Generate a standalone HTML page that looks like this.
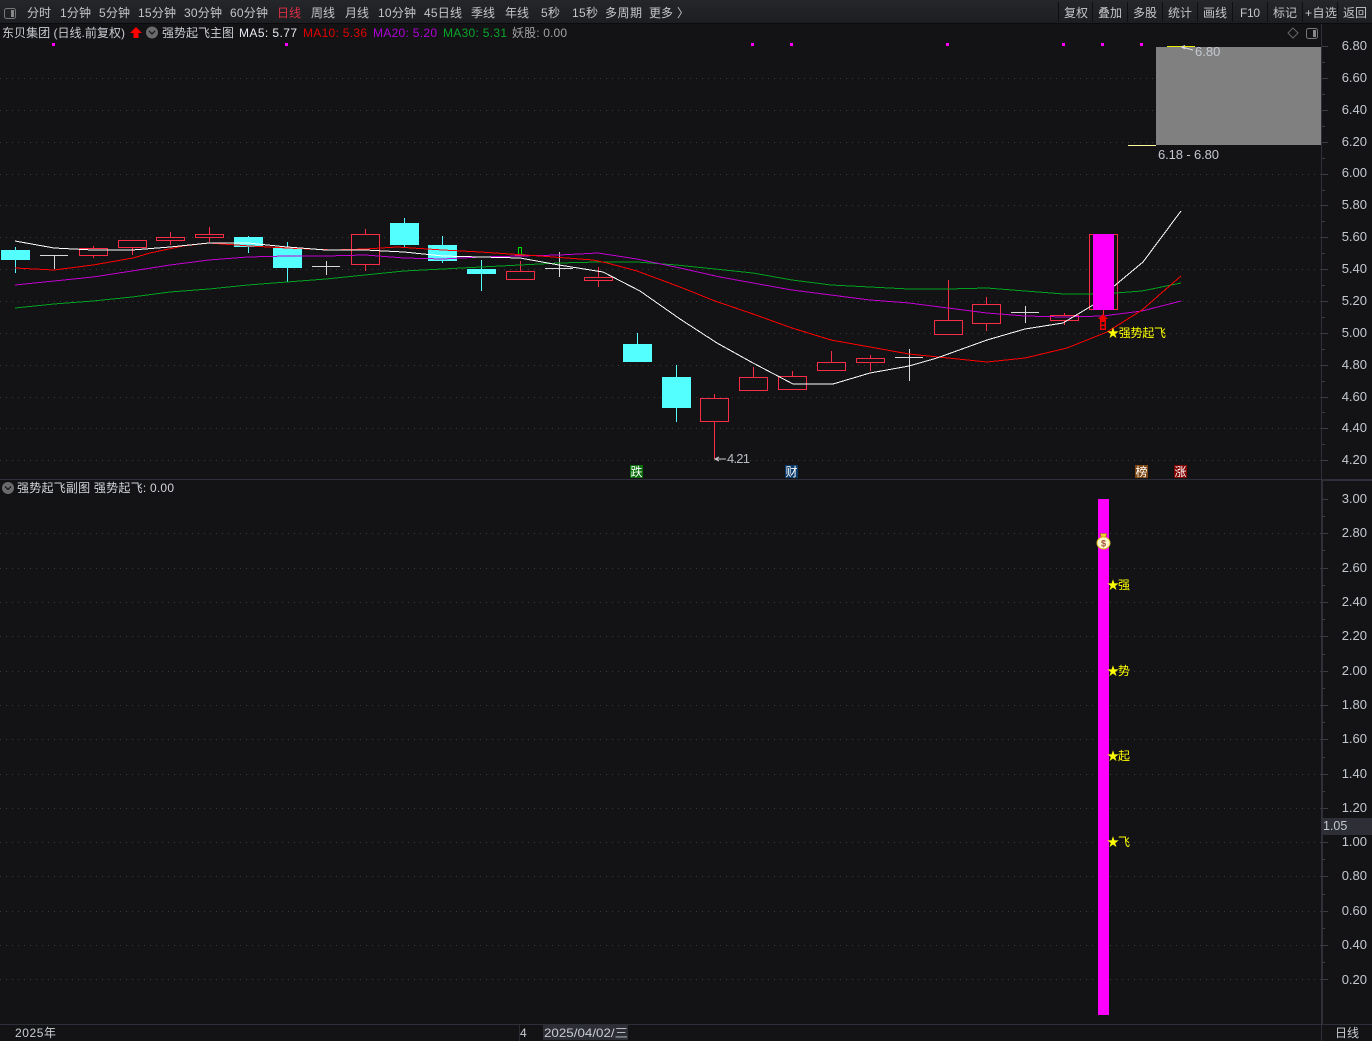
<!DOCTYPE html>
<html lang="zh"><head><meta charset="utf-8"><title>东贝集团</title>
<style>
html,body{margin:0;padding:0;background:#131315;width:1372px;height:1041px;overflow:hidden}
svg{display:block;font-family:"Liberation Sans","Noto Sans CJK SC",sans-serif}
.tb text{font-size:12px;fill:#c4c6ca}
.ax text{font-size:13px;fill:#c3c8d0;text-anchor:end}
.grid line{stroke:#3a3a3e;stroke-width:1;stroke-dasharray:1 5}
.tick line{stroke:#3a3c46;stroke-width:1}
.r rect{fill:#131315;stroke:#f92d45;stroke-width:1}
.r line{stroke:#f92d45;stroke-width:1}
.c rect{fill:#54ffff}
.c line{stroke:#54ffff;stroke-width:1}
.d line{stroke:#d8d8d8;stroke-width:1}
.ma polyline{fill:none;stroke-width:1}
.y text{font-size:12px;fill:#ffff00}
</style></head><body>
<svg width="1372" height="1041" viewBox="0 0 1372 1041" xmlns="http://www.w3.org/2000/svg">
<rect width="1372" height="1041" fill="#131315"/>
<defs><linearGradient id="tbg" x1="0" y1="0" x2="0" y2="1"><stop offset="0" stop-color="#24262a"/><stop offset="1" stop-color="#1c1e22"/></linearGradient></defs>
<rect x="0" y="0" width="1372" height="23" fill="url(#tbg)"/>
<rect x="0" y="23" width="1372" height="1" fill="#0b0b0c"/>
<rect x="4.5" y="8.5" width="11" height="10" rx="2" fill="none" stroke="#777" />
<rect x="11" y="10" width="3" height="7" fill="#888"/>
<g class="tb">
<text x="27" y="17" textLength="24">分时</text>
<text x="60" y="17" textLength="31">1分钟</text>
<text x="99" y="17" textLength="31">5分钟</text>
<text x="138" y="17" textLength="38">15分钟</text>
<text x="184" y="17" textLength="38">30分钟</text>
<text x="230" y="17" textLength="38">60分钟</text>
<text x="277" y="17" textLength="24" style="fill:#dc2f45">日线</text>
<text x="311" y="17" textLength="24">周线</text>
<text x="345" y="17" textLength="24">月线</text>
<text x="378" y="17" textLength="38">10分钟</text>
<text x="424" y="17" textLength="38">45日线</text>
<text x="471" y="17" textLength="24">季线</text>
<text x="505" y="17" textLength="24">年线</text>
<text x="541" y="17" textLength="19">5秒</text>
<text x="572" y="17" textLength="26">15秒</text>
<text x="605" y="17" textLength="37">多周期</text>
<text x="649" y="17">更多</text><text x="677" y="17">〉</text>
<text x="1064" y="17" textLength="24">复权</text>
<text x="1098" y="17" textLength="24">叠加</text>
<text x="1133" y="17" textLength="24">多股</text>
<text x="1168" y="17" textLength="24">统计</text>
<text x="1203" y="17" textLength="24">画线</text>
<text x="1240" y="17" textLength="20">F10</text>
<text x="1273" y="17" textLength="24">标记</text>
<text x="1305" y="17" textLength="32">+自选</text>
<text x="1343" y="17" textLength="24">返回</text>
</g>
<g fill="#0e0f11">
<rect x="1058" y="2" width="1" height="20"/><rect x="1092" y="2" width="1" height="20"/><rect x="1127" y="2" width="1" height="20"/><rect x="1162" y="2" width="1" height="20"/><rect x="1197" y="2" width="1" height="20"/><rect x="1232" y="2" width="1" height="20"/><rect x="1267" y="2" width="1" height="20"/><rect x="1302" y="2" width="1" height="20"/><rect x="1337" y="2" width="1" height="20"/>
</g>

<g style="font-size:12px">
<text x="2" y="37" fill="#c8ccd2" textLength="123" lengthAdjust="spacingAndGlyphs">东贝集团 (日线.前复权)</text>
<path d="M136 27 L142 33 L138.5 33 L138.5 38 L133.5 38 L133.5 33 L130 33 Z" fill="#ff0000"/>
<circle cx="152" cy="32.5" r="6" fill="#6a6a6a"/><path d="M149 31 L152 34 L155 31" fill="none" stroke="#1a1a1a" stroke-width="1.3"/>
<text x="162" y="37" fill="#c8ccd2" textLength="72">强势起飞主图</text>
<text x="239" y="37" fill="#e8ecf2" textLength="58">MA5: 5.77</text>
<text x="303" y="37" fill="#e00000" textLength="64">MA10: 5.36</text>
<text x="373" y="37" fill="#b000d8" textLength="64">MA20: 5.20</text>
<text x="443" y="37" fill="#0aa52a" textLength="64">MA30: 5.31</text>
<text x="512" y="37" fill="#a0a0a0" textLength="55">妖股: 0.00</text>
</g>
<path d="M1293 28 L1298 33 L1293 38 L1288 33 Z" fill="none" stroke="#666"/>
<rect x="1306.5" y="28.5" width="11" height="10" rx="2" fill="none" stroke="#777"/><rect x="1313" y="30" width="3" height="7" fill="#888"/>

<g class="grid" shape-rendering="crispEdges">
<line x1="0" x2="1321" y1="78.5" y2="78.5"/><line x1="0" x2="1321" y1="110.5" y2="110.5"/><line x1="0" x2="1321" y1="142.5" y2="142.5"/><line x1="0" x2="1321" y1="174.5" y2="174.5"/><line x1="0" x2="1321" y1="205.5" y2="205.5"/><line x1="0" x2="1321" y1="237.5" y2="237.5"/><line x1="0" x2="1321" y1="269.5" y2="269.5"/><line x1="0" x2="1321" y1="301.5" y2="301.5"/><line x1="0" x2="1321" y1="333.5" y2="333.5"/><line x1="0" x2="1321" y1="365.5" y2="365.5"/><line x1="0" x2="1321" y1="397.5" y2="397.5"/><line x1="0" x2="1321" y1="428.5" y2="428.5"/><line x1="0" x2="1321" y1="460.5" y2="460.5"/>
<line x1="0" x2="1321" y1="533.5" y2="533.5"/><line x1="0" x2="1321" y1="568.5" y2="568.5"/><line x1="0" x2="1321" y1="602.5" y2="602.5"/><line x1="0" x2="1321" y1="636.5" y2="636.5"/><line x1="0" x2="1321" y1="671.5" y2="671.5"/><line x1="0" x2="1321" y1="705.5" y2="705.5"/><line x1="0" x2="1321" y1="739.5" y2="739.5"/><line x1="0" x2="1321" y1="774.5" y2="774.5"/><line x1="0" x2="1321" y1="808.5" y2="808.5"/><line x1="0" x2="1321" y1="842.5" y2="842.5"/><line x1="0" x2="1321" y1="876.5" y2="876.5"/><line x1="0" x2="1321" y1="911.5" y2="911.5"/><line x1="0" x2="1321" y1="945.5" y2="945.5"/><line x1="0" x2="1321" y1="979.5" y2="979.5"/>
</g>

<g fill="#ff00ff"><rect x="52" y="43" width="3" height="3"/><rect x="285" y="43" width="3" height="3"/><rect x="751" y="43" width="3" height="3"/><rect x="790" y="43" width="3" height="3"/><rect x="946" y="43" width="3" height="3"/><rect x="1062" y="43" width="3" height="3"/><rect x="1101" y="43" width="3" height="3"/><rect x="1140" y="43" width="3" height="3"/></g>

<rect x="1156" y="47" width="165" height="98" fill="#808080"/>
<rect x="1128" y="145" width="28" height="1" fill="#ffffa0"/>
<rect x="1167" y="46" width="28" height="1" fill="#e8e800"/>
<path d="M1193 50 L1182 47 M1185 45.5 L1181.500 47 L1185 49" stroke="#ddd" fill="none"/>
<text x="1195" y="56" font-size="13" fill="#c3c8d0">6.80</text>
<text x="1158" y="159" font-size="13" fill="#c3c8d0" textLength="61">6.18 - 6.80</text>

<g shape-rendering="crispEdges">
<g class="c">
<line x1="15.500" x2="15.500" y1="247" y2="273"/><rect x="1" y="250" width="29" height="10"/>
<line x1="248.500" x2="248.500" y1="236" y2="253"/><rect x="234" y="237" width="29" height="10"/>
<line x1="287.500" x2="287.500" y1="242" y2="282"/><rect x="273" y="248" width="29" height="20"/>
<line x1="404.500" x2="404.500" y1="218" y2="247"/><rect x="390" y="223" width="29" height="22"/>
<line x1="442.500" x2="442.500" y1="236" y2="263"/><rect x="428" y="245" width="29" height="16"/>
<line x1="481.500" x2="481.500" y1="260" y2="291"/><rect x="467" y="269" width="29" height="5"/>
<line x1="637.500" x2="637.500" y1="333" y2="344"/><rect x="623" y="344" width="29" height="18"/>
<line x1="676.500" x2="676.500" y1="365" y2="422"/><rect x="662" y="377" width="29" height="31"/>
</g>
<g class="d">
<line x1="40" x2="68" y1="255.500" y2="255.500"/><line x1="54.500" x2="54.500" y1="255" y2="269"/>
<line x1="312" x2="340" y1="266.500" y2="266.500"/><line x1="326.500" x2="326.500" y1="261" y2="275"/>
<line x1="545" x2="573" y1="268.500" y2="268.500"/><line x1="559.500" x2="559.500" y1="252" y2="277"/>
<line x1="895" x2="923" y1="357.500" y2="357.500"/><line x1="909.500" x2="909.500" y1="349" y2="381"/>
<line x1="1011" x2="1039" y1="312.500" y2="312.500"/><line x1="1025.500" x2="1025.500" y1="306" y2="323"/>
</g>
<g class="r">
<line x1="93.500" x2="93.500" y1="246" y2="258"/><rect x="79.500" y="248.500" width="28" height="7"/>
<line x1="132.500" x2="132.500" y1="240" y2="255"/><rect x="118.500" y="240.500" width="28" height="7"/>
<line x1="170.500" x2="170.500" y1="232" y2="245"/><rect x="156.500" y="237.500" width="28" height="3"/>
<line x1="209.500" x2="209.500" y1="227" y2="242"/><rect x="195.500" y="234.500" width="28" height="3"/>
<line x1="365.500" x2="365.500" y1="229" y2="271"/><rect x="351.500" y="234.500" width="28" height="30"/>
<line x1="520.500" x2="520.500" y1="261" y2="271"/><rect x="506.500" y="271.500" width="28" height="8"/>
<line x1="598.500" x2="598.500" y1="267" y2="287"/><rect x="584.500" y="277.500" width="28" height="3"/>
<line x1="714.500" x2="714.500" y1="394" y2="459"/><rect x="700.500" y="398.500" width="28" height="23"/>
<line x1="753.500" x2="753.500" y1="367" y2="377"/><rect x="739.500" y="377.500" width="28" height="13"/>
<line x1="792.500" x2="792.500" y1="371" y2="376"/><rect x="778.500" y="376.500" width="28" height="13"/>
<line x1="831.500" x2="831.500" y1="351" y2="362"/><rect x="817.500" y="362.500" width="28" height="8"/>
<line x1="870.500" x2="870.500" y1="355" y2="371"/><rect x="856.500" y="358.500" width="28" height="4"/>
<line x1="948.500" x2="948.500" y1="280" y2="320"/><rect x="934.500" y="320.500" width="28" height="14"/>
<line x1="986.500" x2="986.500" y1="297" y2="331"/><rect x="972.500" y="304.500" width="28" height="19"/>
<line x1="1064.500" x2="1064.500" y1="313" y2="325"/><rect x="1050.500" y="315.500" width="28" height="5"/>
<line x1="1103.500" x2="1103.500" y1="309" y2="317"/><rect x="1089.500" y="234.500" width="28" height="75"/>
</g>
<path d="M515.500 254.500 H518.500 V247.500 H521.500 V254.500 H524.500" fill="none" stroke="#00e000"/>
<rect x="515" y="255" width="11" height="1" fill="#f92d45"/>
</g>

<g class="ma" shape-rendering="crispEdges">
<polyline stroke="#00a020" points="15,308 54,304 93,301 132,297 170,292 209,289 248,285 287,282 326,279 365,275 404,271 443,269 481,267 520,265 559,263 598,262 637,262 676,265 715,269 753,273 792,280 831,285 870,287 909,289 948,289 987,288 1025,291 1064,294 1103,294 1142,291 1181,283"/>
<polyline stroke="#c000d0" points="15,285 54,281 93,277 132,271 170,265 209,260 248,257 287,256 326,256 365,255 404,258 443,259 481,257 520,256 559,255 598,253 637,259 680,268 720,277 753,283 792,290 831,295 870,300 909,303 948,308 987,313 1025,316 1064,317 1103,316 1142,311 1181,301"/>
<polyline stroke="#ff0000" points="15,268 54,270 93,265 133,258 150,253 183,246 209,243 250,246 287,248 333,250 365,249 397,247 443,250 480,252 540,256 593,260 607,263 637,271 680,287 715,301 753,314 792,328 831,340 870,347 909,354 948,358 987,362 1025,358 1067,348 1107,332 1142,310 1181,276"/>
<polyline stroke="#ffffff" points="15,241 54,248 93,250 132,250 170,247 209,243 248,243 287,247 326,250 365,250 404,252 443,256 481,257 520,258 559,265 603,272 640,291 680,319 717,343 753,363 793,384 833,384 870,373 909,366 937,358 987,340 1025,329 1063,323 1093,305 1113,287 1143,262 1181,211"/>
</g>
<rect x="1093" y="234" width="21" height="76" fill="#ff00ff" shape-rendering="crispEdges"/>

<path d="M1103 314 L1108 319 L1106 319 L1106 330 L1100 330 L1100 319 L1098 319 Z" fill="#ee0000"/>
<rect x="1101.500" y="322" width="3" height="2.500" fill="#131315"/><rect x="1101.500" y="326" width="3" height="2.500" fill="#131315"/>
<g class="y"><text x="1107" y="337" textLength="59">★强势起飞</text></g>
<path d="M726 459 H716 M719 457 L715 459 L719 461" stroke="#ccc" fill="none"/>
<text x="727" y="463" font-size="13" fill="#b8bcc4" textLength="23">4.21</text>

<rect x="630" y="465" width="13" height="13" fill="#086c08"/><text x="630.500" y="476" font-size="12" fill="#fff">跌</text>
<rect x="785" y="465" width="13" height="13" fill="#0a3a68"/><text x="785.500" y="476" font-size="12" fill="#fff">财</text>
<rect x="1135" y="465" width="13" height="13" fill="#7a4510"/><text x="1135.500" y="476" font-size="12" fill="#fff">榜</text>
<rect x="1174" y="465" width="13" height="13" fill="#800000"/><text x="1174.500" y="476" font-size="12" fill="#fff">涨</text>

<rect x="0" y="479" width="1372" height="1" fill="#2e2f38"/>
<rect x="1321" y="24" width="1" height="1000" fill="#2e2f38"/>
<rect x="1322" y="480" width="1" height="544" fill="#2e2f38"/>
<rect x="1322" y="480" width="50" height="1" fill="#2e2f38"/>
<circle cx="8" cy="488" r="6" fill="#6a6a6a"/><path d="M5 486.500 L8 489.500 L11 486.500" fill="none" stroke="#1a1a1a" stroke-width="1.3"/>
<text x="17" y="492" font-size="12" fill="#d0d4da" textLength="157">强势起飞副图 强势起飞: 0.00</text>

<rect x="1098" y="499" width="11" height="516" fill="#ff00ff"/>
<g><path d="M1100 533.500 H1107 L1105.500 537.500 H1101.500 Z" fill="#f0d030" stroke="#8a6a10" stroke-width=".6"/>
<ellipse cx="1103.500" cy="543" rx="6.500" ry="6" fill="#fff6c8" stroke="#d8b820"/>
<text x="1103.500" y="546.500" font-size="9" font-weight="bold" text-anchor="middle" fill="#a05040">$</text></g>
<g class="y">
<text x="1107" y="589" textLength="23">★强</text>
<text x="1107" y="675" textLength="23">★势</text>
<text x="1107" y="760" textLength="23">★起</text>
<text x="1107" y="846" textLength="23">★飞</text>
</g>

<g class="tick" shape-rendering="crispEdges">
<line x1="1322" x2="1328" y1="46.500" y2="46.500"/><line x1="1322" x2="1325" y1="62.500" y2="62.500"/><line x1="1322" x2="1328" y1="78.500" y2="78.500"/><line x1="1322" x2="1325" y1="94.500" y2="94.500"/><line x1="1322" x2="1328" y1="110.500" y2="110.500"/><line x1="1322" x2="1325" y1="126.500" y2="126.500"/><line x1="1322" x2="1328" y1="142.500" y2="142.500"/><line x1="1322" x2="1325" y1="158.500" y2="158.500"/><line x1="1322" x2="1328" y1="174.500" y2="174.500"/><line x1="1322" x2="1325" y1="190.500" y2="190.500"/><line x1="1322" x2="1328" y1="205.500" y2="205.500"/><line x1="1322" x2="1325" y1="221.500" y2="221.500"/><line x1="1322" x2="1328" y1="237.500" y2="237.500"/><line x1="1322" x2="1325" y1="253.500" y2="253.500"/><line x1="1322" x2="1328" y1="269.500" y2="269.500"/><line x1="1322" x2="1325" y1="285.500" y2="285.500"/><line x1="1322" x2="1328" y1="301.500" y2="301.500"/><line x1="1322" x2="1325" y1="317.500" y2="317.500"/><line x1="1322" x2="1328" y1="333.500" y2="333.500"/><line x1="1322" x2="1325" y1="349.500" y2="349.500"/><line x1="1322" x2="1328" y1="365.500" y2="365.500"/><line x1="1322" x2="1325" y1="381.500" y2="381.500"/><line x1="1322" x2="1328" y1="397.500" y2="397.500"/><line x1="1322" x2="1325" y1="412.500" y2="412.500"/><line x1="1322" x2="1328" y1="428.500" y2="428.500"/><line x1="1322" x2="1325" y1="444.500" y2="444.500"/><line x1="1322" x2="1328" y1="460.500" y2="460.500"/>
<line x1="1322" x2="1328" y1="499.500" y2="499.500"/><line x1="1322" x2="1325" y1="516.500" y2="516.500"/><line x1="1322" x2="1328" y1="533.500" y2="533.500"/><line x1="1322" x2="1325" y1="550.500" y2="550.500"/><line x1="1322" x2="1328" y1="568.500" y2="568.500"/><line x1="1322" x2="1325" y1="585.500" y2="585.500"/><line x1="1322" x2="1328" y1="602.500" y2="602.500"/><line x1="1322" x2="1325" y1="619.500" y2="619.500"/><line x1="1322" x2="1328" y1="636.500" y2="636.500"/><line x1="1322" x2="1325" y1="654.500" y2="654.500"/><line x1="1322" x2="1328" y1="671.500" y2="671.500"/><line x1="1322" x2="1325" y1="688.500" y2="688.500"/><line x1="1322" x2="1328" y1="705.500" y2="705.500"/><line x1="1322" x2="1325" y1="722.500" y2="722.500"/><line x1="1322" x2="1328" y1="739.500" y2="739.500"/><line x1="1322" x2="1325" y1="757.500" y2="757.500"/><line x1="1322" x2="1328" y1="774.500" y2="774.500"/><line x1="1322" x2="1325" y1="791.500" y2="791.500"/><line x1="1322" x2="1328" y1="808.500" y2="808.500"/><line x1="1322" x2="1328" y1="842.500" y2="842.500"/><line x1="1322" x2="1325" y1="859.500" y2="859.500"/><line x1="1322" x2="1328" y1="876.500" y2="876.500"/><line x1="1322" x2="1325" y1="894.500" y2="894.500"/><line x1="1322" x2="1328" y1="911.500" y2="911.500"/><line x1="1322" x2="1325" y1="928.500" y2="928.500"/><line x1="1322" x2="1328" y1="945.500" y2="945.500"/><line x1="1322" x2="1325" y1="962.500" y2="962.500"/><line x1="1322" x2="1328" y1="979.500" y2="979.500"/>
</g>
<g class="ax">
<text x="1367" y="50">6.80</text><text x="1367" y="82">6.60</text><text x="1367" y="114">6.40</text><text x="1367" y="146">6.20</text><text x="1367" y="177">6.00</text><text x="1367" y="209">5.80</text><text x="1367" y="241">5.60</text><text x="1367" y="273">5.40</text><text x="1367" y="305">5.20</text><text x="1367" y="337">5.00</text><text x="1367" y="369">4.80</text><text x="1367" y="401">4.60</text><text x="1367" y="432">4.40</text><text x="1367" y="464">4.20</text>
<text x="1367" y="503">3.00</text><text x="1367" y="537">2.80</text><text x="1367" y="572">2.60</text><text x="1367" y="606">2.40</text><text x="1367" y="640">2.20</text><text x="1367" y="675">2.00</text><text x="1367" y="709">1.80</text><text x="1367" y="743">1.60</text><text x="1367" y="778">1.40</text><text x="1367" y="812">1.20</text><text x="1367" y="846">1.00</text><text x="1367" y="880">0.80</text><text x="1367" y="915">0.60</text><text x="1367" y="949">0.40</text><text x="1367" y="984">0.20</text>
</g>
<rect x="1323" y="818" width="49" height="17" fill="#2e2f36"/>
<text x="1323" y="830" font-size="12.500" fill="#c3c8d0">1.05</text>

<rect x="0" y="1024" width="1372" height="1" fill="#2e2f38"/>
<rect x="1321" y="1025" width="1" height="16" fill="#2e2f38"/>
<rect x="519" y="1025" width="1" height="16" fill="#2a2b32"/>
<rect x="543" y="1025" width="85" height="15" fill="#2c2d35"/>
<g font-size="12" fill="#c8ccd2">
<text x="15" y="1037" textLength="41">2025年</text>
<text x="520" y="1037">4</text>
<text x="544" y="1037" textLength="84" lengthAdjust="spacingAndGlyphs">2025/04/02/三</text>
<text x="1335" y="1037" textLength="24">日线</text>
</g>
</svg>
</body></html>
